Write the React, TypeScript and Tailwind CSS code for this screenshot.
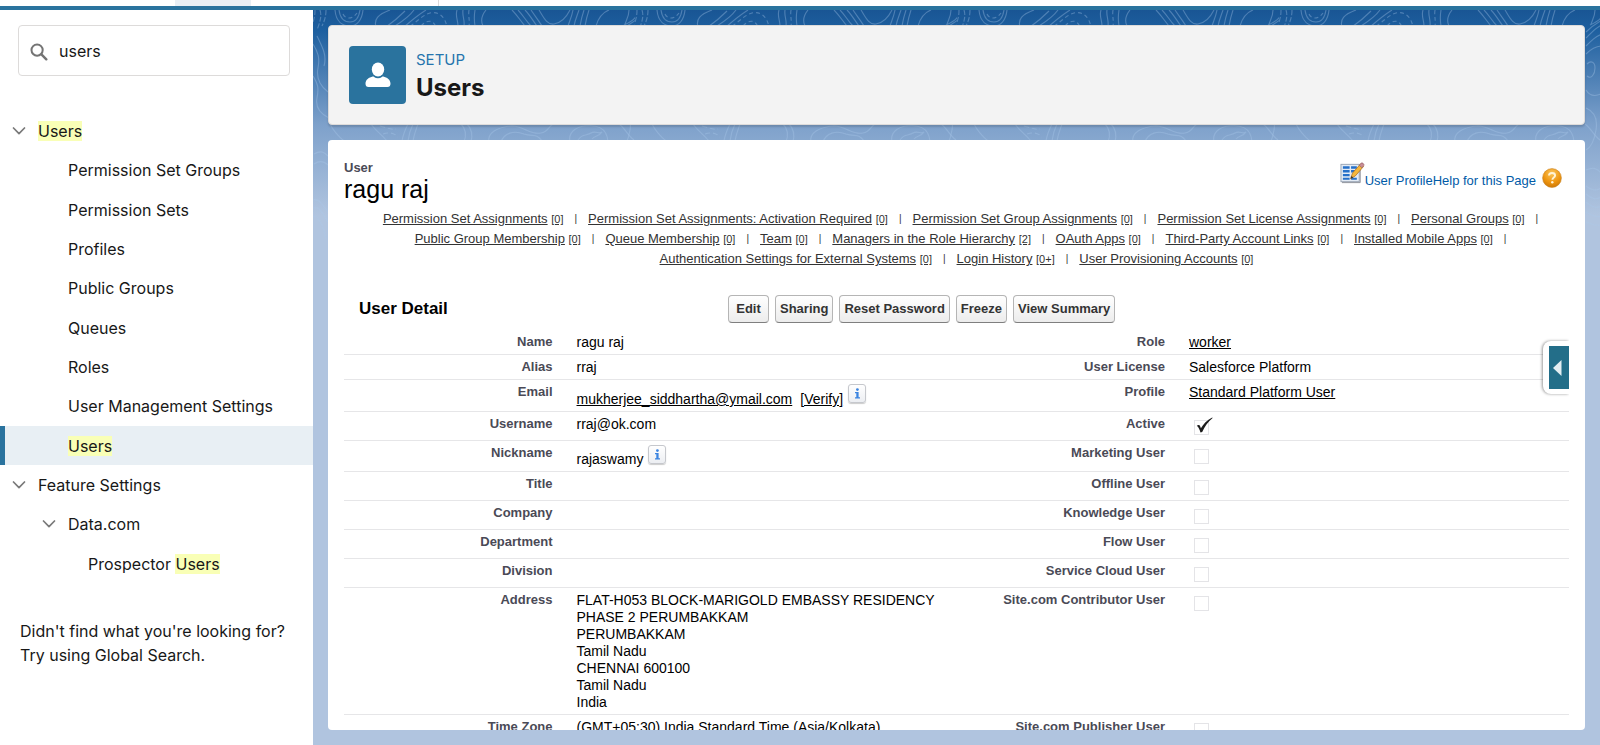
import { Fragment, type ReactNode } from "react";

type NavItem = { label: ReactNode; indent: string; chevron?: boolean; active?: boolean };

function Mark({ children }: { children: ReactNode }) {
  return <mark className="bg-[#f9ffb6] text-[#181818]">{children}</mark>;
}

const navItems: NavItem[] = [
  { label: <Mark>Users</Mark>, indent: "pl-3", chevron: true },
  { label: "Permission Set Groups", indent: "pl-[68px]" },
  { label: "Permission Sets", indent: "pl-[68px]" },
  { label: "Profiles", indent: "pl-[68px]" },
  { label: "Public Groups", indent: "pl-[68px]" },
  { label: "Queues", indent: "pl-[68px]" },
  { label: "Roles", indent: "pl-[68px]" },
  { label: "User Management Settings", indent: "pl-[68px]" },
  { label: <Mark>Users</Mark>, indent: "pl-[63px]", active: true },
  { label: "Feature Settings", indent: "pl-3", chevron: true },
  { label: "Data.com", indent: "pl-[42px]", chevron: true },
  { label: <>Prospector <Mark>Users</Mark></>, indent: "pl-[88px]" },
];

const relatedLinks: [string, string][][] = [
  [
    ["Permission Set Assignments", "[0]"],
    ["Permission Set Assignments: Activation Required", "[0]"],
    ["Permission Set Group Assignments", "[0]"],
    ["Permission Set License Assignments", "[0]"],
    ["Personal Groups", "[0]"],
  ],
  [
    ["Public Group Membership", "[0]"],
    ["Queue Membership", "[0]"],
    ["Team", "[0]"],
    ["Managers in the Role Hierarchy", "[2]"],
    ["OAuth Apps", "[0]"],
    ["Third-Party Account Links", "[0]"],
    ["Installed Mobile Apps", "[0]"],
  ],
  [
    ["Authentication Settings for External Systems", "[0]"],
    ["Login History", "[0+]"],
    ["User Provisioning Accounts", "[0]"],
  ],
];

function ChevronDown() {
  return (
    <svg className="mr-3 h-2 w-[14px] shrink-0" viewBox="0 0 14 8" fill="none" stroke="#7a7a7a" strokeWidth="1.7" strokeLinecap="round" strokeLinejoin="round" aria-hidden="true">
      <path d="M1.500 1L7 6.700 12.500 1" />
    </svg>
  );
}

function InfoIcon() {
  return (
    <button type="button" aria-label="Info" className="flex h-[19px] w-[18px] shrink-0 items-center justify-center rounded-[3px] border border-[#c6c8cd] bg-linear-to-b from-white to-[#eceef2] shadow-[0_1px_1px_rgba(0,0,0,0.2)]">
      <svg className="h-[11px] w-[7px]" viewBox="0 0 7 11" fill="#3b84e0" aria-hidden="true">
        <circle cx="3.4" cy="1.6" r="1.4" />
        <path d="M1 4h3.6v5.2H6V10.4H1V9.2h1.3V5.2H1z" />
      </svg>
    </button>
  );
}

function ReadOnlyCheck({ id, checked = false }: { id: string; checked?: boolean }) {
  return (
    <span className="relative ml-[5px] flex h-[21px] w-[20px] items-start pt-1">
      <input
        id={id}
        type="checkbox"
        checked={checked}
        readOnly
        className="h-[15px] w-[15px] appearance-none border border-[#e4e4e7] bg-white"
      />
      {checked && (
        <svg className="absolute top-[1px] left-[2px] h-4 w-[17px]" viewBox="0 0 17 16" fill="#1c1c1c" aria-hidden="true">
          <path d="M.8 8.700c1-.8 2.200-1 2.900-.2.500.700.900 1.700 1.200 2.800C7.400 6.800 10.800 3 16.200.4l.4.500C12 4.600 8.800 9 6.200 15l-1.700.5C3.700 13 2.700 10 .8 8.700z" />
        </svg>
      )}
    </span>
  );
}

function Contours() {
  return (
    <svg className="absolute inset-x-0 top-0 h-[235px] w-full" aria-hidden="true">
      <defs>
        <pattern id="contours" width="322" height="235" patternUnits="userSpaceOnUse">
          <g fill="none" stroke="#a9c9ea" strokeOpacity=".36" strokeWidth="1.1">
            <path d="M22 0c1 12 8 16 15 16s12-6 13-16M26 0c1 8 5 12 11 12s9-5 10-12" />
            <path d="M30 4c2 5 9 6 14-1" strokeDasharray="4 3" />
            <path d="M2 0c0 6-1 10-4 18M7 0c2 6 0 12-3 20M13 0c0 7-2 12-4 16" strokeDasharray="5 2" />
            <path d="M77 0C66 4 59 9 64 20M92 1C86 7 80 12 73 17M101 0C96 7 90 11 82 16M113 0C105 5 99 10 91 17" />
            <path d="M97 16c6-3 12-11 20-13s15 3 17 14M108 16c5-6 12-7 15 1" strokeDasharray="4 3" />
            <path d="M144 0c-2 6 1 10 1 16M150 0c-1 6 2 10 1 16M162 0c-1 6-1 10 0 16M173 0c-4 5-6 10-3 16" />
            <path d="M156 0c-1 6 1 10 0 16" strokeDasharray="4 3" />
            <path d="M199 0c5 5 8 10 13 16M205 0c5 5 8 11 13 16M212 0c5 5 8 11 12 16M218 0c4 6 8 11 11 16M226 0c5 8 8 15 15 14s12-6 16-14M260 0c-1 6-3 10-5 16M266 0c-2 6-4 10-5 16M271 0c-2 6-3 10-4 16M276 0c-2 6-3 10-4 16M296 0c-8 3-11 9-13 16" />
            <path d="M311 15c9-4 14-8 15-17M316 0c0 6-2 9-4 14" />
            <path d="M17 114c3 6 8 12 14 17M58 114c4 6 10 10 16 17M95 114c-3 6-5 10-6 17M100 114c-3 6-4 10-5 17M105 114c-2 6-4 10-5 17" />
            <path d="M67 116c7 2 12 4 16 3M70 124c7-2 11-1 15 3" strokeDasharray="5 3" />
            <path d="M148 114c5 5 6 10 3 18M154 114c5 5 6 10 4 18M176 132c-2-9 8-15 23-16 12 0 18 9 29 7 7-1 7-6 12-9M188 132c3-9 13-12 23-8 9 3 13-1 18 7M257 132c-2-9 5-15 15-16s22 0 23 16M264 132c4-9 10-6 14-9 5-3 8 2 11-1-3 5-7 3-10 7M306 114c6 4 8 11 15 16" />
            <path d="M307 28c6-6 9-10 17-14M307 22c5-5 9-8 16-12M307 36c6-6 9-9 16-12M307 44c5-5 10-8 16-8M308 54c4-4 8-2 8 4s-4 12-8 8M307 80c3 5 8 7 15 4M307 98c7 3 12 10 10 22s-6 18-10 20" />
            <path d="M0 34c5 8 7 14 5 24s2 18 10 24M4 26c6 12 10 20 7 30M0 66c5 8 6 12 4 22s4 16 12 20M1 144c7-4 10-2 14 2M1 154c6-4 10-3 14 1M0 190c6-2 9 4 15 12M0 198c6-2 9 4 15 14M0 206c5 0 9 6 13 22" />
            <path d="M307 160c7-3 11-2 15 3M307 176c6 5 10 5 15 2M307 184c6 5 10 6 15 3M307 192c6 5 10 7 15 4M307 202c6 3 10 6 15 4M307 212c6 2 9 4 15 3" />
          </g>
        </pattern>
      </defs>
      <rect width="100%" height="100%" fill="url(#contours)" />
    </svg>
  );
}

function ProfileIcon() {
  return (
    <svg className="h-6 w-[25px]" viewBox="0 0 26 24" aria-hidden="true">
      <rect x="1" y="3" width="19" height="18" fill="#e3ebf5" stroke="#9aa5b5" />
      <path d="M2 22h19V6" fill="none" stroke="#8b8f98" strokeWidth="1" />
      <g fill="#2570c9">
        <path d="M3 5h7v2.500H3zM3 9h7v2.500H3zM3 13h7v2.500H3zM3 17h7v2H3zM11.500 5h6v2.500h-6zM11.500 9h4v2.500h-4zM11.500 17h6v2h-6z" />
      </g>
      <path d="M11 18l2-6 8.500-9.500 3 2.700L16 15z" fill="#f5b73c" stroke="#a3661b" strokeWidth=".7" />
      <path d="M20 4l2-2.300c1-1 3.800 1.300 2.800 2.500L22.800 6.600z" fill="#c98c96" stroke="#8d5c63" strokeWidth=".6" />
      <path d="M11 18l.9-3 2 1.800z" fill="#333" />
    </svg>
  );
}

function HelpIcon() {
  return (
    <svg className="h-5 w-5" viewBox="0 0 20 20" aria-hidden="true">
      <defs>
        <radialGradient id="orb" cx=".5" cy=".25" r=".8">
          <stop offset="0" stopColor="#fbc65c" />
          <stop offset=".6" stopColor="#ee950f" />
          <stop offset="1" stopColor="#c97405" />
        </radialGradient>
      </defs>
      <circle cx="10" cy="10" r="9.400" fill="url(#orb)" stroke="#c98323" strokeWidth=".6" />
      <path d="M7 7.600C7 5.800 8.300 5 10 5s3.100.9 3.100 2.500c0 2-2.700 2.100-2.700 4.300" fill="none" stroke="#fff3d6" strokeWidth="1.900" />
      <circle cx="10.300" cy="14.300" r="1.200" fill="#fff3d6" />
    </svg>
  );
}

type Row = {
  left: string;
  leftValue?: ReactNode;
  right: string;
  rightValue: ReactNode;
  id?: string;
};

const check = (id: string, right: string, left: string, leftValue?: ReactNode, checked?: boolean): Row => ({
  left,
  leftValue,
  right,
  id,
  rightValue: <ReadOnlyCheck id={id} checked={checked} />,
});

const rows: Row[] = [
  { left: "Name", leftValue: "ragu raj", right: "Role", rightValue: <a href="#role" className="underline">worker</a> },
  { left: "Alias", leftValue: "rraj", right: "User License", rightValue: "Salesforce Platform" },
  {
    left: "Email",
    leftValue: (
      <span className="flex h-6">
        <a href="#email" className="self-end underline">mukherjee_siddhartha@ymail.com</a>
        <a href="#verify" className="ml-2 self-end underline">[Verify]</a>
        <span className="ml-[5px]"><InfoIcon /></span>
      </span>
    ),
    right: "Profile",
    rightValue: <a href="#profile" className="underline">Standard Platform User</a>,
  },
  check("active", "Active", "Username", "rraj@ok.com", true),
  check(
    "marketing",
    "Marketing User",
    "Nickname",
    <span className="flex h-[23px]">
      <span className="self-end">rajaswamy</span>
      <span className="ml-[5px]"><InfoIcon /></span>
    </span>,
  ),
  check("offline", "Offline User", "Title"),
  check("knowledge", "Knowledge User", "Company"),
  check("flow", "Flow User", "Department"),
  check("service", "Service Cloud User", "Division"),
  check(
    "contributor",
    "Site.com Contributor User",
    "Address",
    <address className="not-italic">
      FLAT-H053 BLOCK-MARIGOLD EMBASSY RESIDENCY<br />
      PHASE 2 PERUMBAKKAM<br />
      PERUMBAKKAM<br />
      Tamil Nadu<br />
      CHENNAI 600100<br />
      Tamil Nadu<br />
      India
    </address>,
  ),
  check("publisher", "Site.com Publisher User", "Time Zone", "(GMT+05:30) India Standard Time (Asia/Kolkata)"),
];

const labelCell = "pt-1 pr-3 pb-[3px] text-right align-top text-[13px] leading-4 font-bold text-[#4a4a56]";
const valueCell = "pt-1 pb-[3px] pl-3 align-top text-sm leading-[17px] text-black";

function Sidebar() {
  return (
    <aside className="w-[313px] shrink-0 bg-white text-base text-[#181818]">
      <div className="pt-[15px] pr-[23px] pl-[18px]">
        <label className="flex h-[51px] items-center rounded-[4px] border border-[#dddbda] pl-[11px]">
          <span className="sr-only">Quick Find</span>
          <svg className="mt-[2px] h-[18px] w-[18px] shrink-0" viewBox="0 0 17 17" fill="none" stroke="#747474" strokeLinecap="round" aria-hidden="true">
            <circle cx="6.700" cy="6.700" r="5.300" strokeWidth="1.900" />
            <path d="M10.800 10.800l4.600 4.600" strokeWidth="2.300" />
          </svg>
          <input type="text" defaultValue="users" className="ml-[11px] h-full w-full min-w-0 bg-transparent outline-none" />
        </label>
      </div>
      <nav className="mt-[35px] grid h-[472px] auto-rows-fr">
        {navItems.map((item, i) => (
          <a
            key={i}
            href="#setup"
            className={`flex items-center pt-px ${item.indent} ${item.active ? "border-l-[5px] border-[#2a739e] bg-[#e8eff4]" : ""}`}
          >
            {item.chevron && <ChevronDown />}
            <span>{item.label}</span>
          </a>
        ))}
      </nav>
      <p className="mt-9 px-5 leading-6">
        Didn't find what you're looking for?
        <br />
        Try using Global Search.
      </p>
    </aside>
  );
}

export default function App() {
  return (
    <div className="flex h-screen flex-col overflow-hidden bg-white font-['Inter',sans-serif]">
      <header className="flex h-[10px] shrink-0 border-b-4 border-[#2a739e] bg-white">
        <div className="ml-[175px] w-[76px] bg-[#e9eff5]" />
        <div className="w-[188px] border-r border-[#dddbda]" />
      </header>
      <div className="flex min-h-0 flex-1">
        <Sidebar />
        <main className="relative flex min-w-0 flex-1 flex-col gap-[15px] bg-[#b0c4df] bg-[linear-gradient(to_bottom,#195594_0px,#1d5f9f_20px,#7ea1cb_115px,#b0c4df_205px)] p-[15px]">
          <Contours />
          <section className="relative flex h-[100px] shrink-0 items-start rounded-[4px] border border-[#dddbda] bg-[#f3f3f3] px-5 pt-5 shadow-[0_2px_2px_rgba(0,0,0,0.15)]">
            <div className="flex h-[58px] w-[57px] items-center justify-center rounded-[4px] bg-[#2a739e]">
              <svg className="h-[26px] w-[26px]" viewBox="0 0 26 26" fill="#fff" aria-hidden="true">
                <ellipse cx="13" cy="7.500" rx="6.200" ry="7" />
                <path d="M7.700 14.600C4 15.600.5 17.600.5 21.700c0 2 1.100 3.300 3 3.300h19c1.900 0 3-1.300 3-3.300 0-4.100-3.500-6.100-7.200-7.100-.5-.1-1 0-1.400.4-1.100.8-2.400 1.200-3.900 1.200s-2.800-.4-3.900-1.200c-.4-.4-.9-.5-1.400-.4z" />
              </svg>
            </div>
            <div className="ml-[10px] pt-[3px]">
              <p className="text-[15px] leading-[22px] text-[#2574ad]">SETUP</p>
              <h1 className="text-[24px] leading-[33px] font-bold text-[#181818]">Users</h1>
            </div>
          </section>
          <section className="relative min-h-0 flex-1 overflow-hidden rounded-[4px] bg-white px-4 font-['Liberation_Sans',Arial,sans-serif]">
            <div className="flex items-start justify-between pt-5">
              <div>
                <p className="text-[13px] leading-4 font-bold text-[#4a4a56]">User</p>
                <h2 className="text-[25px] leading-[26px] text-black">ragu raj</h2>
              </div>
              <div className="flex pt-px pr-[7px] text-[13px] leading-5 text-[#015ba7]">
                <ProfileIcon />
                <a href="#profile" className="pt-[10px]">User Profile</a>
                <a href="#help" className="flex">
                  <span className="pt-[10px]">Help for this Page</span>
                  <span className="ml-[6px] pt-[7px]"><HelpIcon /></span>
                </a>
              </div>
            </div>
            <nav className="mt-[7px] text-[13px] leading-5 whitespace-nowrap text-[#333]">
              {relatedLinks.map((line, i) => (
                <div key={i} className={`flex justify-center gap-[11px] ${i < 2 ? "pl-2" : ""}`}>
                  {line.map(([name, count], j) => (
                    <Fragment key={name}>
                      <a href="#related">
                        <span className="underline">{name}</span>{" "}
                        <span className="text-[11px] underline">{count}</span>
                      </a>
                      {(i < 2 || j < line.length - 1) && <span className="text-[10px]">|</span>}
                    </Fragment>
                  ))}
                </div>
              ))}
            </nav>
            <div className="mt-[26px] flex items-center">
              <h3 className="w-[384px] pl-[15px] text-[17px] font-bold text-black">User Detail</h3>
              <div className="flex gap-[6px]">
                {["Edit", "Sharing", "Reset Password", "Freeze", "View Summary"].map((name) => (
                  <button
                    key={name}
                    type="button"
                    className="h-7 min-w-[41px] rounded-[4px] border border-[#b5b5b5] border-b-[#7f7f7f] bg-linear-to-b from-white to-[#ececec] px-1 text-[13px] font-bold text-[#333]"
                  >
                    {name}
                  </button>
                ))}
              </div>
            </div>
            <table className="mt-[7px] w-full table-fixed border-collapse">
              <colgroup>
                <col className="w-[18%]" />
                <col className="w-[32%]" />
                <col className="w-[18%]" />
                <col className="w-[32%]" />
              </colgroup>
              <tbody>
                {rows.map((row) => (
                  <tr key={row.left} className="border-b border-[#e6e6e8]">
                    <th scope="row" className={labelCell}>{row.left}</th>
                    <td className={valueCell}>{row.leftValue}</td>
                    <th scope="row" className={labelCell}>
                      {row.id ? <label htmlFor={row.id}>{row.right}</label> : row.right}
                    </th>
                    <td className={valueCell}>{row.rightValue}</td>
                  </tr>
                ))}
              </tbody>
            </table>
            <button
              type="button"
              aria-label="Open panel"
              className="absolute top-[201px] right-4 flex h-[53px] w-[26px] items-center justify-end rounded-l-[8px] bg-white shadow-[-1px_0_3px_rgba(0,0,0,0.4)] [clip-path:inset(-4px_0_-4px_-6px)]"
            >
              <span className="flex h-[43px] w-5 items-center bg-[#236e89] pl-1">
                <svg className="h-4 w-[9px]" viewBox="0 0 9 16" aria-hidden="true">
                  <path d="M8.500 0v16L0 8z" fill="#e4eef2" />
                </svg>
              </span>
            </button>
          </section>
        </main>
      </div>
    </div>
  );
}
